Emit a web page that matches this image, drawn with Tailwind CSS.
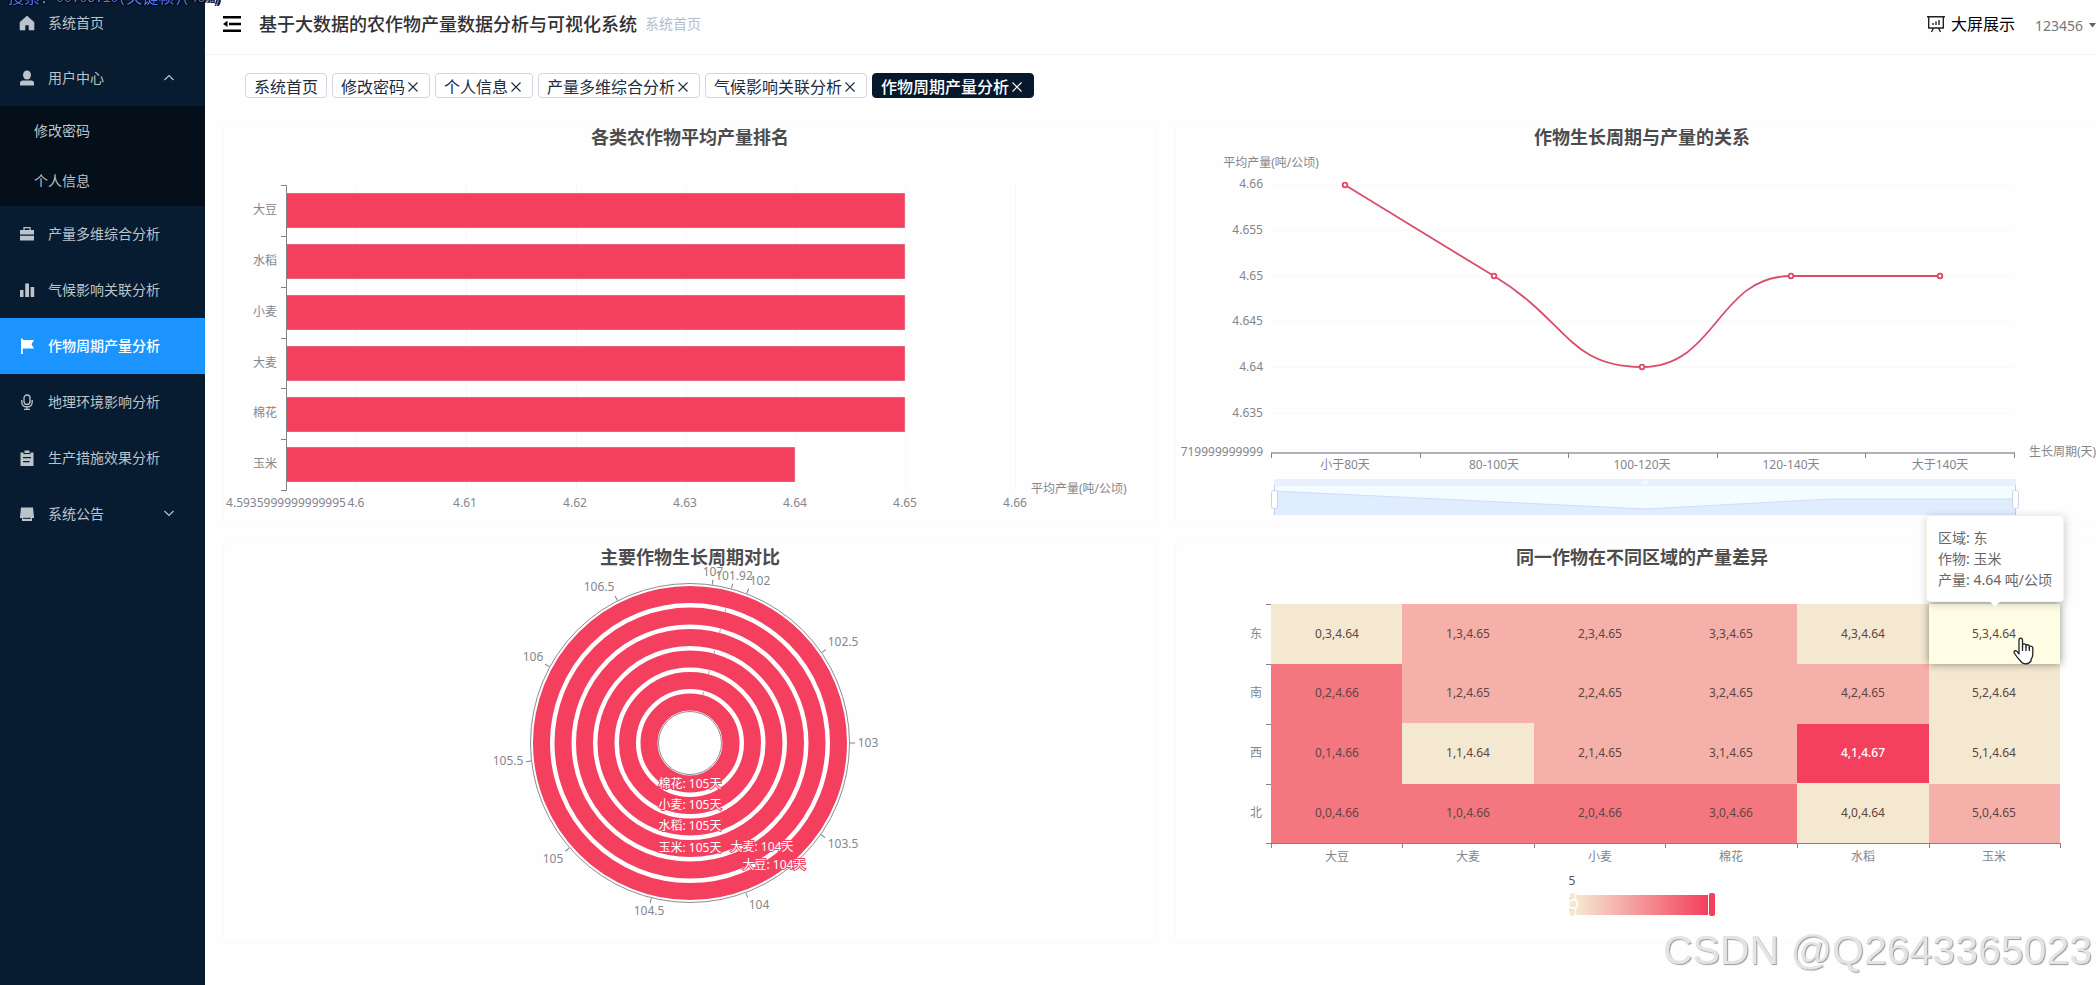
<!DOCTYPE html>
<html lang="zh-CN">
<head>
  <meta charset="UTF-8" />
  <meta name="viewport" content="width=device-width, initial-scale=1.0" />
  <title>基于大数据的农作物产量数据分析与可视化系统</title>
  <script src="https://cdn.jsdelivr.net/npm/@tailwindcss/browser@4"></script>
</head>
<body class="flex min-h-screen overflow-hidden bg-[#fefeff] font-['Noto_Sans','Noto_Sans_CJK_SC',sans-serif] text-[#333]">

  <!-- Sidebar -->
  <aside class="w-[205px] shrink-0 bg-[#081c31] text-sm text-[#bcc3ca]">
    <nav>
      <a href="#" class="flex h-[50px] items-center gap-3 pb-1 pl-[18px]">
        <svg class="size-[18px]" viewBox="0 0 18 18" fill="currentColor"><path d="M9 2 L16 8.200 V16 H11 V11 H7 V16 H2 V8.200 Z" stroke="currentColor" stroke-linejoin="round" stroke-width=".6"/></svg>
        系统首页
      </a>
      <a href="#" class="flex h-14 items-center gap-3 pl-[18px]">
        <svg class="size-[18px]" viewBox="0 0 18 18" fill="currentColor"><ellipse cx="9" cy="6" rx="4" ry="4.500"/><path d="M2 16.500 V14 Q2 11.500 5 11.500 H13 Q16 11.500 16 14 V16.500 Z"/></svg>
        <span class="flex-1">用户中心</span>
        <svg class="mr-[30px] size-3" viewBox="0 0 12 12" fill="none" stroke="currentColor" stroke-width="1.200"><path d="M1.500 8 L6 3.500 L10.500 8"/></svg>
      </a>
      <div class="bg-[#050f1a]">
        <a href="#" class="flex h-[50px] items-center pl-[34px]">修改密码</a>
        <a href="#" class="flex h-[50px] items-center pl-[34px]">个人信息</a>
      </div>
      <a href="#" class="flex h-14 items-center gap-3 pl-[18px]">
        <svg class="size-[18px]" viewBox="0 0 18 18" fill="currentColor"><path d="M2 5 H16 V9.500 H2 Z M2 10.700 H16 V15.500 H2 Z"/><path d="M6 5 V2.700 H12 V5" fill="none" stroke="currentColor" stroke-width="1.300"/></svg>
        产量多维综合分析
      </a>
      <a href="#" class="flex h-14 items-center gap-3 pl-[18px]">
        <svg class="size-[18px]" viewBox="0 0 18 18" fill="currentColor"><path d="M2 9 H5.500 V16 H2 Z M7.200 2.500 H11 V16 H7.200 Z M12.600 6 H16.200 V16 H12.600 Z"/></svg>
        气候影响关联分析
      </a>
      <a href="#" class="flex h-14 items-center gap-3 bg-[#1c94ff] pl-[18px] font-medium text-white">
        <svg class="size-[18px]" viewBox="0 0 18 18" fill="currentColor"><path d="M3 1.500 H4.800 V3 H16 L13.500 7.300 L16 11.500 H4.800 V17 H3 Z"/></svg>
        作物周期产量分析
      </a>
      <a href="#" class="flex h-14 items-center gap-3 pl-[18px]">
        <svg class="size-[18px]" viewBox="0 0 18 18" fill="none" stroke="currentColor" stroke-width="1.300"><rect x="6" y="2" width="6" height="9.500" rx="3"/><path d="M3.800 7 V9 Q3.800 14 9 14 Q14.200 14 14.200 9 V7 M9 14 V16.300 M6 16.300 H12"/></svg>
        地理环境影响分析
      </a>
      <a href="#" class="flex h-14 items-center gap-3 pl-[18px]">
        <svg class="size-[18px]" viewBox="0 0 18 18" fill="currentColor"><path fill-rule="evenodd" d="M2.500 3.500 H5.500 V5 H12.500 V3.500 H15.500 V17 H2.500 Z M5 8 V9.300 H13 V8 Z M5 12 V13.300 H11.500 V12 Z"/><path d="M6.500 1.500 H11.500 V4 H6.500 Z"/></svg>
        生产措施效果分析
      </a>
      <a href="#" class="flex h-14 items-center gap-3 pl-[18px]">
        <svg class="size-[18px]" viewBox="0 0 18 18" fill="currentColor"><path d="M3 2.500 H15 L16 12 H2 Z"/><path d="M2 11 H16 V13 H14 V16 H4 V13 H2 Z"/><path d="M5 13.300 H13" stroke="#081c31"/></svg>
        <span class="flex-1">系统公告</span>
        <svg class="mr-[30px] size-3" viewBox="0 0 12 12" fill="none" stroke="currentColor" stroke-width="1.200"><path d="M1.500 3 L6 7.500 L10.500 3"/></svg>
      </a>
    </nav>
  </aside>

  <div class="min-w-0 flex-1 overflow-hidden">
    <!-- Header -->
    <header class="flex h-[55px] items-center border-b border-[#f1f2f9] pb-1.5 pl-[18px]">
      <button aria-label="收起菜单">
        <svg class="h-4 w-[18px]" viewBox="0 0 18 16" fill="#000"><path d="M0 0 H18 V2.500 H0 Z M6 6.700 H18 V9.200 H6 Z M0 13.500 H18 V16 H0 Z M0 7.900 L4.500 4.800 V11 Z"/></svg>
      </button>
      <h1 class="ml-[18px] text-lg font-medium text-[#303133]">基于大数据的农作物产量数据分析与可视化系统</h1>
      <a href="#" class="ml-2 text-sm text-[#b5bccd]">系统首页</a>
      <button class="ml-auto flex items-center gap-1.5 text-base text-black">
        <svg class="size-[18px]" viewBox="0 0 18 18" fill="none" stroke="#222" stroke-width="1.400"><path d="M0 1.700 H18 M1.700 1.700 V13 H16.300 V1.700 M6.500 13 L4.500 17 M11.500 13 L13.500 17 M6 10 V8 M9 10 V6.500 M12 10 V5"/></svg>
        大屏展示
      </button>
      <button class="ml-5 flex items-center gap-1.5 pt-1 text-sm text-[#777]">
        123456
        <svg class="h-2 w-[7px]" viewBox="0 0 7 8" fill="#606266"><path d="M0 1 H7 L3.500 5.500 Z"/></svg>
      </button>
    </header>

    <!-- Opened pages -->
    <div class="flex gap-[5px] pt-[18px] pl-10 text-base leading-none text-[#1b2c40]">
      <a href="#" class="flex h-[25px] items-center rounded border border-[#d3d6df] bg-white px-2 pt-[3px]">系统首页</a>
      <a href="#" class="flex h-[25px] items-center rounded border border-[#d3d6df] bg-white px-2 pt-[3px]">修改密码<svg class="size-4" viewBox="0 0 16 16" fill="none" stroke="currentColor" stroke-width="1.100"><path d="M3.500 3.500 L12.500 12.500 M12.500 3.500 L3.500 12.500"/></svg></a>
      <a href="#" class="flex h-[25px] items-center rounded border border-[#d3d6df] bg-white px-2 pt-[3px]">个人信息<svg class="size-4" viewBox="0 0 16 16" fill="none" stroke="currentColor" stroke-width="1.100"><path d="M3.500 3.500 L12.500 12.500 M12.500 3.500 L3.500 12.500"/></svg></a>
      <a href="#" class="flex h-[25px] items-center rounded border border-[#d3d6df] bg-white px-2 pt-[3px]">产量多维综合分析<svg class="size-4" viewBox="0 0 16 16" fill="none" stroke="currentColor" stroke-width="1.100"><path d="M3.500 3.500 L12.500 12.500 M12.500 3.500 L3.500 12.500"/></svg></a>
      <a href="#" class="flex h-[25px] items-center rounded border border-[#d3d6df] bg-white px-2 pt-[3px]">气候影响关联分析<svg class="size-4" viewBox="0 0 16 16" fill="none" stroke="currentColor" stroke-width="1.100"><path d="M3.500 3.500 L12.500 12.500 M12.500 3.500 L3.500 12.500"/></svg></a>
      <a href="#" class="flex h-[25px] items-center rounded border border-[#06182c] bg-[#06182c] px-2 pt-[3px] font-medium text-white">作物周期产量分析<svg class="size-4" viewBox="0 0 16 16" fill="none" stroke="currentColor" stroke-width="1.100"><path d="M3.500 3.500 L12.500 12.500 M12.500 3.500 L3.500 12.500"/></svg></a>
    </div>

    <!-- Charts -->
    <main class="-mr-3 grid grid-cols-2 gap-5 pt-[25px] pl-[19px]">

      <!-- Average yield ranking -->
      <section class="rounded-sm ring-1 ring-[#fafafd]">
        <svg class="block w-full" viewBox="0 0 932 400" font-size="12" fill="#85868b" dominant-baseline="central">
          <text x="466" y="14" font-size="18" font-weight="700" fill="#4c4c4c" text-anchor="middle">各类农作物平均产量排名</text>
          <g stroke="#f7f7fa"><path d="M132.500 62 V367 M242.500 62 V367 M352.500 62 V367 M462.500 62 V367 M571.500 62 V367 M681.500 62 V367 M791.500 62 V367"/></g>
          <g fill="#f43f5e" stroke="#d9405c" stroke-opacity=".6">
            <rect x="62.500" y="70.500" width="618" height="34"/>
            <rect x="62.500" y="121.500" width="618" height="34"/>
            <rect x="62.500" y="172.500" width="618" height="34"/>
            <rect x="62.500" y="223.500" width="618" height="34"/>
            <rect x="62.500" y="274.500" width="618" height="34"/>
            <rect x="62.500" y="324.500" width="508" height="34"/>
          </g>
          <path d="M57 62.500 H62.500 V367.500 H57 M57 113.500 H62 M57 164.500 H62 M57 215.500 H62 M57 265.500 H62 M57 316.500 H62" fill="none" stroke="#808388"/>
          <g text-anchor="end">
            <text x="53" y="86">大豆</text>
            <text x="53" y="137">水稻</text>
            <text x="53" y="188">小麦</text>
            <text x="53" y="239">大麦</text>
            <text x="53" y="289">棉花</text>
            <text x="53" y="340">玉米</text>
          </g>
          <g text-anchor="middle">
            <text x="62" y="379">4.5935999999999995</text>
            <text x="132" y="379">4.6</text>
            <text x="241" y="379">4.61</text>
            <text x="351" y="379">4.62</text>
            <text x="461" y="379">4.63</text>
            <text x="571" y="379">4.64</text>
            <text x="681" y="379">4.65</text>
            <text x="791" y="379">4.66</text>
          </g>
          <text x="807" y="365">平均产量(吨/公顷)</text>
        </svg>
      </section>

      <!-- Growth period and yield -->
      <section class="rounded-sm ring-1 ring-[#fafafd]">
        <svg class="block w-full" viewBox="0 0 932 400" font-size="12" fill="#85868b" dominant-baseline="central">
          <text x="466" y="14" font-size="18" font-weight="700" fill="#4c4c4c" text-anchor="middle">作物生长周期与产量的关系</text>
          <text x="95" y="39" text-anchor="middle">平均产量(吨/公顷)</text>
          <path d="M96 62.500 H838 M96 107.500 H838 M96 153.500 H838 M96 198.500 H838 M96 244.500 H838 M96 290.500 H838" stroke="#f9f9fb"/>
          <path d="M95 330 H839" stroke="#97999c" stroke-width="1.500"/>
          <path d="M95.500 330 V335 M244.500 330 V335 M392.500 330 V335 M541.500 330 V335 M689.500 330 V335 M838.500 330 V335" stroke="#808388"/>
          <g text-anchor="end">
            <text x="87" y="60">4.66</text>
            <text x="87" y="106">4.655</text>
            <text x="87" y="152">4.65</text>
            <text x="87" y="197">4.645</text>
            <text x="87" y="243">4.64</text>
            <text x="87" y="289">4.635</text>
            <text x="87" y="328">719999999999</text>
          </g>
          <g text-anchor="middle">
            <text x="169" y="341">小于80天</text>
            <text x="318" y="341">80-100天</text>
            <text x="466" y="341">100-120天</text>
            <text x="615" y="341">120-140天</text>
            <text x="764" y="341">大于140天</text>
          </g>
          <text x="853" y="328">生长周期(天)</text>
          <path d="M169 62 C169 62 260 118 318 153 C392 198 392 244 466 244 C541 244 541 153 615 153 L764 153" fill="none" stroke="#d84e69" stroke-width="1.800"/>
          <g fill="#fff" stroke="#e04663" stroke-width="1.800">
            <circle cx="169" cy="62" r="2.300"/>
            <circle cx="318" cy="153" r="2.300"/>
            <circle cx="466" cy="244" r="2.300"/>
            <circle cx="615" cy="153" r="2.300"/>
            <circle cx="764" cy="153" r="2.300"/>
          </g>
          <!-- data zoom -->
          <rect x="98" y="356" width="742" height="36" fill="#f3fdff"/>
          <rect x="98" y="356" width="742" height="7" fill="#e9f0fe"/>
          <path d="M98 368 L284 377 L469 386 L655 376 H840 V392 H98 Z" fill="#e0edfe"/>
          <path d="M98 368 L284 377 L469 386 L655 376 H840" fill="none" stroke="#d0dcf9"/>
          <path d="M467 358 V361 M469 358 V361 M471 358 V361" stroke="#fff"/>
          <path d="M98.500 362 V392 M839.500 362 V392" stroke="#bfcdf0"/>
          <rect x="95.500" y="367.500" width="6" height="18" rx="2" fill="#fff" stroke="#c9d3ee"/>
          <rect x="836.500" y="367.500" width="6" height="18" rx="2" fill="#fff" stroke="#c9d3ee"/>
        </svg>
      </section>

      <!-- Growth period by crop -->
      <section class="rounded-sm ring-1 ring-[#fafafd]">
        <svg class="block w-full" viewBox="0 0 932 400" font-size="12" fill="#85868b" dominant-baseline="central">
          <text x="466" y="14" font-size="18" font-weight="700" fill="#4c4c4c" text-anchor="middle">主要作物生长周期对比</text>
          <g fill="none" stroke="#f43f5e" stroke-width="17">
            <circle cx="466" cy="200" r="148.500"/>
            <circle cx="466" cy="200" r="127"/>
            <circle cx="466" cy="200" r="105.500"/>
            <circle cx="466" cy="200" r="84"/>
            <circle cx="466" cy="200" r="62.500"/>
            <circle cx="466" cy="200" r="41"/>
          </g>
          <g fill="none" stroke="#8b8d92">
            <circle cx="466" cy="200" r="159.500"/>
            <circle cx="466" cy="200" r="31.500"/>
          </g>
          <g stroke="#808388">
            <path d="M466 40 V35" transform="rotate(8 466 200)"/>
            <path d="M466 40 V35" transform="rotate(15 466 200)"/>
            <path d="M466 65 V61 M466 86 V82 M466 108 V104 M466 129 V125 M466 151 V147" stroke-opacity=".7" transform="rotate(15 466 200)"/>
            <path d="M466 40 V35" transform="rotate(20.800 466 200)"/>
            <path d="M466 40 V35" transform="rotate(55.500 466 200)"/>
            <path d="M466 40 V35" transform="rotate(90 466 200)"/>
            <path d="M466 40 V35" transform="rotate(125 466 200)"/>
            <path d="M466 40 V35" transform="rotate(159.500 466 200)"/>
            <path d="M466 40 V35" transform="rotate(194 466 200)"/>
            <path d="M466 40 V35" transform="rotate(229 466 200)"/>
            <path d="M466 40 V35" transform="rotate(263.500 466 200)"/>
            <path d="M466 40 V35" transform="rotate(298.500 466 200)"/>
            <path d="M466 40 V35" transform="rotate(333 466 200)"/>
          </g>
          <g text-anchor="middle">
            <text x="489" y="28">107</text>
            <text x="510" y="32">101.92</text>
            <text x="536" y="37">102</text>
            <text x="619" y="98">102.5</text>
            <text x="644" y="199">103</text>
            <text x="619" y="300">103.5</text>
            <text x="535" y="361">104</text>
            <text x="425" y="367">104.5</text>
            <text x="329" y="315">105</text>
            <text x="284" y="217">105.5</text>
            <text x="309" y="113">106</text>
            <text x="375" y="43">106.5</text>
          </g>
          <g text-anchor="middle" fill="#fff" stroke="#f43f5e" stroke-width="2" paint-order="stroke">
            <text x="466" y="240">棉花: 105天</text>
            <text x="466" y="261">小麦: 105天</text>
            <text x="466" y="282">水稻: 105天</text>
            <text x="466" y="304">玉米: 105天</text>
            <text x="538" y="303">大麦: 104天</text>
            <text x="550" y="321">大豆: 104天</text>
          </g>
        </svg>
      </section>

      <!-- Yield by region -->
      <section class="relative rounded-sm ring-1 ring-[#fafafd]">
        <svg class="block w-full" viewBox="0 0 932 400" font-size="12" fill="#85868b" dominant-baseline="central">
          <defs>
            <linearGradient id="range"><stop offset="0" stop-color="#f5e8d0"/><stop offset="1" stop-color="#f43f5e"/></linearGradient>
            <filter id="lift" x="-20%" y="-30%" width="140%" height="160%"><feDropShadow dx="0" dy="0" stdDeviation="4" flood-color="#000" flood-opacity=".45"/></filter>
          </defs>
          <text x="466" y="14" font-size="18" font-weight="700" fill="#4c4c4c" text-anchor="middle">同一作物在不同区域的产量差异</text>

          <rect x="95" y="61" width="789" height="239" fill="#f5b0a9"/>
          <g fill="#f5e8d0">
            <rect x="95" y="61" width="131" height="60"/>
            <rect x="226" y="180" width="132" height="61"/>
            <rect x="621" y="61" width="132" height="60"/>
            <rect x="621" y="240" width="132" height="60"/>
            <rect x="753" y="61" width="131" height="180"/>
          </g>
          <g fill="#f47780">
            <rect x="95" y="121" width="131" height="179"/>
            <rect x="226" y="241" width="395" height="59"/>
          </g>
          <rect x="621" y="181" width="132" height="59" fill="#f43f5e"/>
          <rect x="753" y="61" width="131" height="60" fill="#fffde4" filter="url(#lift)"/>

          <path d="M90 61.500 H95 M90 121.500 H95 M90 181.500 H95 M90 241.500 H95 M90 300.500 H884 M95.500 300 V305 M226.500 300 V305 M358.500 300 V305 M489.500 300 V305 M621.500 300 V305 M753.500 300 V305 M884.500 300 V305" stroke="#8b8085"/>

          <g text-anchor="end">
            <text x="86" y="90">东</text>
            <text x="86" y="149">南</text>
            <text x="86" y="209">西</text>
            <text x="86" y="269">北</text>
          </g>
          <g text-anchor="middle">
            <text x="161" y="313">大豆</text>
            <text x="292" y="313">大麦</text>
            <text x="424" y="313">小麦</text>
            <text x="555" y="313">棉花</text>
            <text x="687" y="313">水稻</text>
            <text x="818" y="313">玉米</text>
          </g>
          <g text-anchor="middle" fill="#5e4645">
            <text x="161" y="90">0,3,4.64</text>
            <text x="292" y="90">1,3,4.65</text>
            <text x="424" y="90">2,3,4.65</text>
            <text x="555" y="90">3,3,4.65</text>
            <text x="687" y="90">4,3,4.64</text>
            <text x="818" y="90">5,3,4.64</text>
            <text x="161" y="149">0,2,4.66</text>
            <text x="292" y="149">1,2,4.65</text>
            <text x="424" y="149">2,2,4.65</text>
            <text x="555" y="149">3,2,4.65</text>
            <text x="687" y="149">4,2,4.65</text>
            <text x="818" y="149">5,2,4.64</text>
            <text x="161" y="209">0,1,4.66</text>
            <text x="292" y="209">1,1,4.64</text>
            <text x="424" y="209">2,1,4.65</text>
            <text x="555" y="209">3,1,4.65</text>
            <text x="687" y="209" fill="#fff" font-weight="500">4,1,4.67</text>
            <text x="818" y="209">5,1,4.64</text>
            <text x="161" y="269">0,0,4.66</text>
            <text x="292" y="269">1,0,4.66</text>
            <text x="424" y="269">2,0,4.66</text>
            <text x="555" y="269">3,0,4.66</text>
            <text x="687" y="269">4,0,4.64</text>
            <text x="818" y="269">5,0,4.65</text>
          </g>

          <!-- visual map -->
          <text x="396" y="337" text-anchor="middle" fill="#555">5</text>
          <rect x="400" y="352" width="132" height="20" fill="url(#range)"/>
          <rect x="394" y="350" width="5" height="23" rx="2" fill="#f5e8d0"/>
          <path d="M393 356.500 H396 A5 5 0 0 1 396 366 H393" fill="none" stroke="#ccc" stroke-width="3" stroke-opacity=".5"/>
          <circle cx="397" cy="361" r="4.500" fill="#f5e8d0" stroke="#fff" stroke-width="1.800"/>
          <rect x="533" y="350" width="6" height="23" rx="2" fill="#f43f5e"/>
        </svg>

        <!-- tooltip -->
        <div class="absolute -top-7 right-11 rounded border border-[#f7f1e4] bg-white px-[11px] py-[11px] text-sm leading-[21px] whitespace-nowrap text-[#666] shadow-[1px_2px_10px_rgba(0,0,0,0.2)]">
          <p>区域: 东</p>
          <p>作物: 玉米</p>
          <p>产量: 4.64 吨/公顷</p>
          <div class="absolute -bottom-1 left-1/2 size-2 -translate-x-1/2 rotate-45 bg-white"></div>
        </div>
        <svg class="absolute top-[94px] right-[74px] h-7 w-[21px]" viewBox="0 0 21 28" fill="#fff" stroke="#222" stroke-width="1.300" stroke-linejoin="round">
          <path d="M6 17 V3.500 Q6 1.200 7.800 1.200 Q9.500 1.200 9.500 3.500 V10 V7.800 Q11 6 13 7.800 V10 V8.300 Q14.800 7 16.300 8.800 V11 V9.500 Q18.500 8.300 19.800 10.500 V17 Q19.800 20 18 22.500 V24 Q16 26.800 12.500 26.800 Q9 26.800 7.500 24 Q4.500 21 1.200 16 Q.6 14 2.500 13.700 Q4 13.700 6 17 Z"/>
          <path d="M9.500 9 V14 M13 9.500 V14 M16.300 10 V14" fill="none"/>
        </svg>
      </section>
    </main>
  </div>

  <!-- Player overlay -->
  <div class="pointer-events-none fixed -top-[9px] left-2 flex h-4 items-center font-['Liberation_Mono','Noto_Sans_CJK_SC',monospace] text-[13px] leading-4 whitespace-nowrap text-[#5078ff] [text-shadow:1px_1px_0_#0b0d18,-1px_1px_0_#0b0d18,1px_-1px_0_#0b0d18,-1px_-1px_0_#0b0d18,2px_1px_0_#0b0d18]">
    <span class="text-base leading-4">搜索：</span>00:03:10(<span class="text-base leading-4">关键帧</span>)(49%)
  </div>

  <!-- Watermark -->
  <div class="pointer-events-none fixed right-1 bottom-3.5 font-['Liberation_Sans',sans-serif] text-[41px] leading-none text-[#e4e4e4] [text-shadow:1px_1px_1px_#999]">CSDN @Q2643365023</div>
</body>
</html>
